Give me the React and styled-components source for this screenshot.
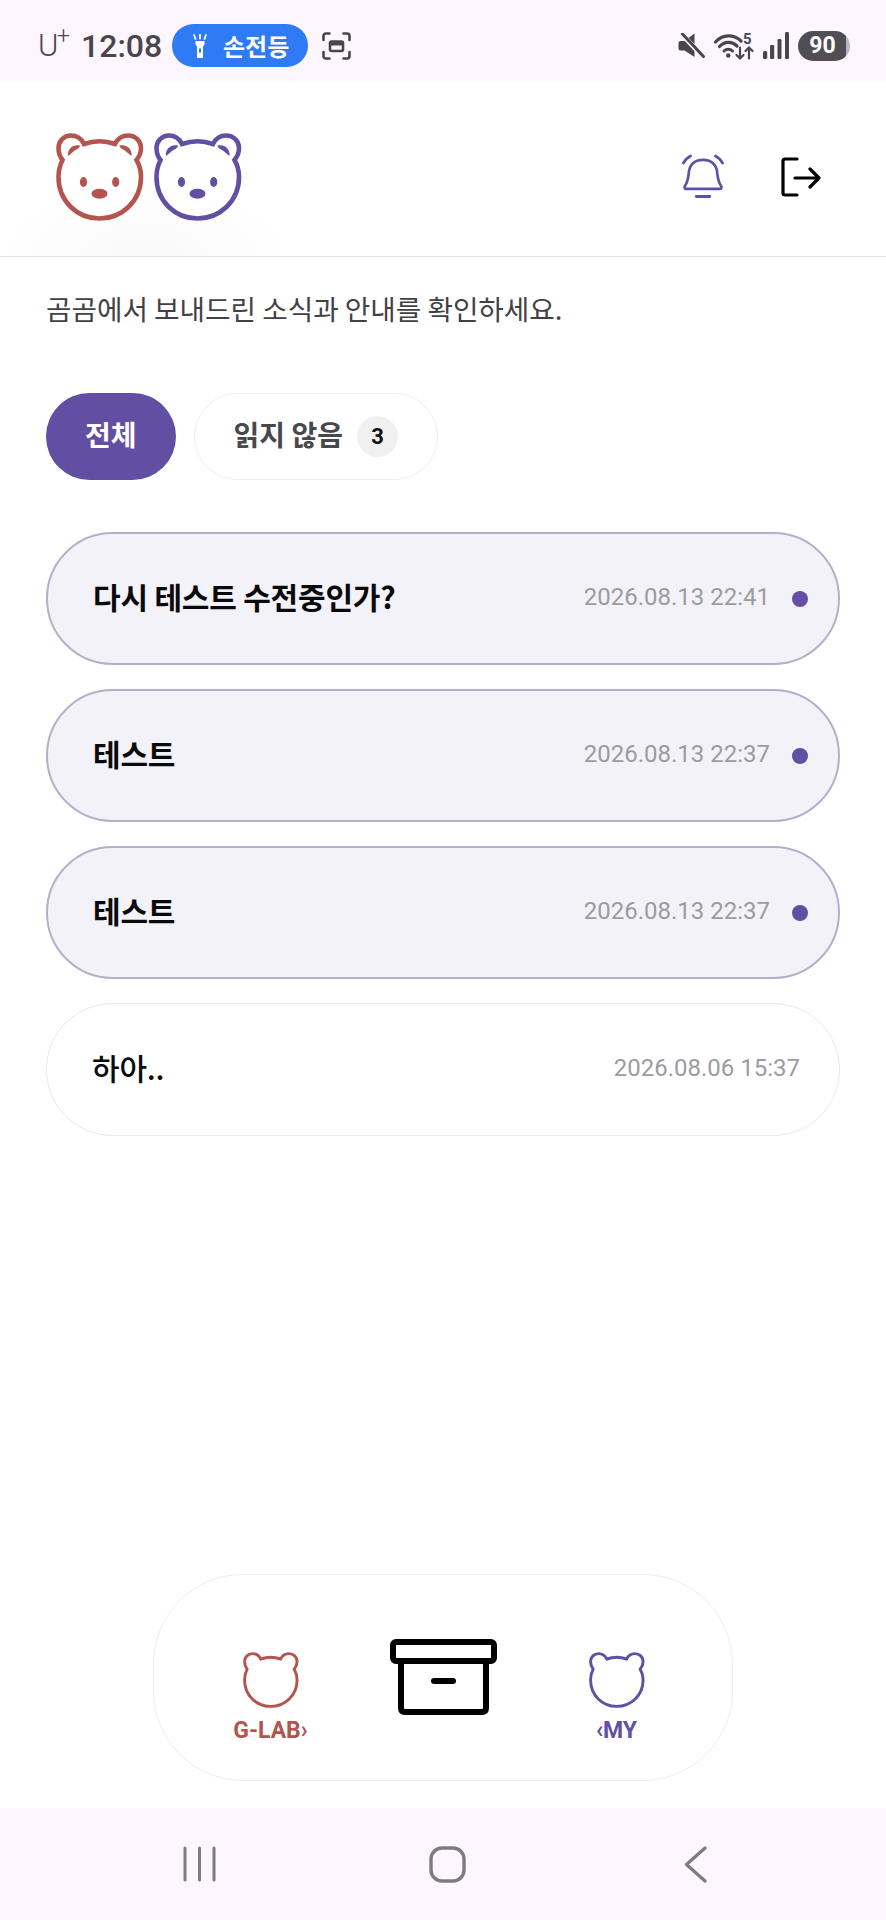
import React from "react";
import styled, { createGlobalStyle } from "styled-components";

const RED = "#b5534d";
const PURPLE = "#624ea3";

const GlobalStyle = createGlobalStyle`
  html, body {
    margin: 0;
    padding: 0;
    background: #fff;
  }
  body {
    font-family: "Noto Sans CJK KR", Roboto, sans-serif;
  }
`;

const Page = styled.div`
  width: 886px;
  height: 1920px;
  display: flex;
  flex-direction: column;
  background: #fff;
  overflow: hidden;
`;

const StatusBar = styled.div`
  height: 81px;
  flex: none;
  display: flex;
  align-items: center;
  justify-content: space-between;
  padding: 10px 36px 0 38px;
  background: #fdf6fe;
  box-sizing: border-box;
  color: #48464c;
`;

const StatusLeft = styled.div`
  display: flex;
  align-items: center;
`;

const Carrier = styled.span`
  font-family: Roboto, sans-serif;
  font-size: 31px;
  font-weight: 300;
  position: relative;
  width: 43px;
  line-height: 36px;
  sup {
    position: absolute;
    left: 19px;
    top: -3px;
    font-size: 23px;
    line-height: 24px;
  }
`;

const Clock = styled.span`
  font-family: Roboto, sans-serif;
  font-size: 32px;
  font-weight: 500;
  width: 91px;
  line-height: 36px;
`;

const TorchPill = styled.div`
  width: 136px;
  height: 43px;
  border-radius: 22px;
  background: #2f7bf6;
  color: #fff;
  display: flex;
  align-items: center;
  padding-left: 21px;
  gap: 16px;
  box-sizing: border-box;
  font-size: 24px;
  font-weight: 700;
  margin-right: 14px;
`;

const StatusRight = styled.div`
  display: flex;
  align-items: center;
  gap: 9px;
`;

const Battery = styled.div`
  width: 52px;
  height: 30px;
  border-radius: 15px;
  background: linear-gradient(90deg, #504e54 93%, #b9b7bc 93%);
  color: #fff;
  font-family: Roboto, sans-serif;
  font-size: 23px;
  font-weight: 700;
  display: flex;
  align-items: center;
  justify-content: center;
  padding-right: 3px;
  box-sizing: border-box;
`;

const Header = styled.header`
  height: 176px;
  flex: none;
  box-sizing: border-box;
  display: flex;
  align-items: center;
  justify-content: space-between;
  padding: 16px 65px 0 56px;
  border-bottom: 1px solid #e5e5e6;
  background: radial-gradient(ellipse 150px 75px at 145px 100%, #f9f9f9, #fff);
`;

const Logo = styled.div`
  display: flex;
  gap: 10px;
`;

const HeaderActions = styled.div`
  display: flex;
  align-items: center;
  gap: 57px;
`;

const Subtitle = styled.p`
  margin: 31px 46px 0;
  font-size: 27.7px;
  line-height: 40px;
  color: #414145;
`;

const Tabs = styled.div`
  display: flex;
  gap: 18px;
  margin: 65px 46px 0;
`;

const Tab = styled.div`
  height: 87px;
  box-sizing: border-box;
  border-radius: 44px;
  display: flex;
  align-items: center;
  padding: 0 39px 5px;
  gap: 14px;
  font-size: 28px;
  font-weight: 700;
  color: ${(p) => (p.$active ? "#fff" : "#48484c")};
  background: ${(p) => (p.$active ? PURPLE : "#fff")};
  border: ${(p) => (p.$active ? "none" : "1.5px solid #ececef")};
`;

const CountBadge = styled.span`
  width: 41px;
  height: 41px;
  margin-top: 5px;
  border-radius: 50%;
  background: #f0f0f0;
  color: #111;
  font-family: Roboto, sans-serif;
  font-size: 22px;
  font-weight: 700;
  display: flex;
  align-items: center;
  justify-content: center;
`;

const List = styled.div`
  display: flex;
  flex-direction: column;
  gap: 24px;
  margin: 52px 46px 0;
`;

const Row = styled.div`
  height: 133px;
  box-sizing: border-box;
  border-radius: 67px;
  display: flex;
  align-items: center;
  padding: 0 ${(p) => (p.$unread ? "30px" : "39px")} 0 45px;
  background: ${(p) => (p.$unread ? "#f3f2f9" : "#fff")};
  border: ${(p) => (p.$unread ? "2px solid #b3b0cb" : "1.5px solid #e9e9ec")};
`;

const RowTitle = styled.span`
  flex: 1;
  font-size: 30px;
  font-weight: ${(p) => (p.$unread ? 700 : 500)};
  color: #0a0a0c;
  letter-spacing: -0.2px;
  padding-bottom: 6px;
`;

const RowDate = styled.span`
  font-family: Roboto, sans-serif;
  font-size: 24px;
  color: #9c9ba1;
  padding-bottom: 3px;
`;

const Dot = styled.span`
  width: 16px;
  height: 16px;
  border-radius: 50%;
  background: ${PURPLE};
  margin-left: 22px;
`;

const Spacer = styled.div`
  flex: 1;
`;

const BottomNav = styled.nav`
  width: 580px;
  height: 207px;
  box-sizing: border-box;
  align-self: center;
  margin: 0 0 27px;
  border: 1.5px solid #ececef;
  border-radius: 90px;
  display: grid;
  grid-template-columns: 1fr 1fr 1fr;
  padding: 0 29px 0 30px;
`;

const NavItem = styled.div`
  display: flex;
  flex-direction: column;
  align-items: center;
  justify-content: ${(p) => (p.$center ? "flex-start" : "flex-end")};
  padding-top: ${(p) => (p.$center ? "64px" : "0")};
  padding-bottom: ${(p) => (p.$center ? "0" : "36px")};
  gap: 10px;
  font-family: Roboto, sans-serif;
  font-size: 23px;
  font-weight: 700;
  line-height: 26px;
  color: ${(p) => p.$color || "#000"};
`;

const SystemNav = styled.div`
  height: 112px;
  flex: none;
  background: #fdf6fe;
  display: flex;
  align-items: center;
  justify-content: space-between;
  padding: 0 179px 0 183px;
  box-sizing: border-box;
  svg:nth-child(2) {
    margin-right: 5px;
  }
`;

const BEAR_PATH =
  "M28 11 C38 7.5 49 7.5 59 11 C62 5 67 2.5 72 2.5 C79.5 2.5 85 8 85 15 C85 20 83 24 80.5 27 C83.5 32 85 38 85 44 C85 68 66 85.5 43.5 85.5 C21 85.5 2.5 68 2.5 44 C2.5 38 4 32 6.5 27 C4 24 2.5 20 2.5 15 C2.5 8 8 2.5 15 2.5 C20 2.5 25 5 28 11 Z";

const BearFace = ({ color }) => (
  <svg width="88" height="88" viewBox="0 0 88 88">
    <path d={BEAR_PATH} fill="#fff" stroke={color} strokeWidth="4.6" />
    <path d="M12 23 C11 16 17 11 24 12.5 C24 15 21 16 18 18 C16 19.5 15 21 12 23 Z" fill={color} />
    <path d="M75.5 23 C76.5 16 70.5 11 63.5 12.5 C63.5 15 66.5 16 69.5 18 C71.5 19.5 72.5 21 75.5 23 Z" fill={color} />
    <ellipse cx="27.5" cy="49" rx="3.6" ry="5" fill={color} />
    <ellipse cx="59.7" cy="49" rx="3.6" ry="5" fill={color} />
    <ellipse cx="43.5" cy="60.7" rx="8" ry="5" fill={color} />
  </svg>
);

const BearOutline = ({ color }) => (
  <svg width="56" height="56" viewBox="0 0 88 88">
    <path d={BEAR_PATH} fill="none" stroke={color} strokeWidth="4.6" />
  </svg>
);

const TorchIcon = () => (
  <svg width="14" height="24" viewBox="0 0 14 24" fill="#fff">
    <path d="M2.5 7 H11.5 V10.5 L10 12.5 V24 H4 V12.5 L2.5 10.5 Z M6 14.5 V18.5 H8 V14.5 Z" fillRule="evenodd" />
    <path d="M1 1 L2.5 5 M7 0.5 V4.5 M13 1 L11.5 5" stroke="#fff" strokeWidth="1.8" strokeLinecap="round" />
  </svg>
);

const ScreenshotIcon = () => (
  <svg width="29" height="28" viewBox="0 0 29 28" fill="none" stroke="#48464c" strokeWidth="2.6" strokeLinecap="round">
    <path d="M1.5 8 V4 Q1.5 1.5 4 1.5 H7.5 M21.5 1.5 H25 Q27.5 1.5 27.5 4 V8 M27.5 20 V24 Q27.5 26.5 25 26.5 H21.5 M7.5 26.5 H4 Q1.5 26.5 1.5 24 V20" />
    <rect x="8" y="9.5" width="13" height="9.5" rx="1.5" strokeWidth="2.6" />
    <path d="M8 10 H21 V13.5 H8 Z" fill="#48464c" stroke="none" />
  </svg>
);

const MuteIcon = () => (
  <svg width="27" height="25" viewBox="0 0 27 25">
    <path d="M0.5 10 Q0.5 8 2.5 8 H6.5 L16.5 0.5 V24 L6.5 17.5 H2.5 Q0.5 17.5 0.5 15.5 Z" fill="#48464c" />
    <path d="M3 0.5 L25.5 24" stroke="#fdf6fe" strokeWidth="5" />
    <path d="M4.5 1 L25.5 23.5" stroke="#48464c" strokeWidth="3" strokeLinecap="round" />
  </svg>
);

const WifiIcon = () => (
  <svg width="40" height="28" viewBox="0 0 40 28" fill="none" stroke="#48464c" strokeLinecap="round" overflow="visible">
    <path d="M1.5 10 C8.5 2 20 2 27 9" strokeWidth="3.2" />
    <path d="M5.5 14.5 C10.5 9 18 9 23 14" strokeWidth="3.2" />
    <path d="M10 19 C12.5 16.5 16 16.5 18.5 19" strokeWidth="3" />
    <circle cx="14.2" cy="23.5" r="2.2" fill="#48464c" stroke="none" />
    <path d="M26 15.5 V26.5 M22.5 23 L26 26.5 L29.5 23 M35 26.5 V15.5 M31.5 19 L35 15.5 L38.5 19" strokeWidth="2.2" />
    <text x="29" y="12" fontFamily="Roboto, sans-serif" fontSize="15" fontWeight="700" fill="#48464c" stroke="none">5</text>
  </svg>
);

const SignalIcon = () => (
  <svg width="26" height="27" viewBox="0 0 26 27" fill="#48464c">
    <rect x="0" y="19" width="4.2" height="8" rx="1.5" />
    <rect x="7" y="13" width="4.2" height="14" rx="1.2" />
    <rect x="14.5" y="7" width="4" height="20" rx="1.2" />
    <rect x="22" y="0" width="4" height="27" rx="1.2" />
  </svg>
);

const BellIcon = () => (
  <svg width="42" height="45" viewBox="0 0 44 46" fill="none" stroke={PURPLE} strokeWidth="2.8" strokeLinecap="round" strokeLinejoin="round">
    <path d="M4 36 Q2 36 3 33 C6 29 6.5 25 7 20 C7.5 11 13 5.5 22 5.5 C31 5.5 36.5 11 37 20 C37.5 25 38 29 41 33 Q42 36 40 36 Z" />
    <path d="M15 44 H29" strokeWidth="3" />
    <path d="M1.5 9 Q4 4 9 1.5 M42.5 9 Q40 4 35 1.5" />
  </svg>
);

const LogoutIcon = () => (
  <svg width="40" height="40" viewBox="0 0 40 40" fill="none" stroke="#000" strokeWidth="3.2" strokeLinecap="round" strokeLinejoin="round">
    <path d="M16 2 H4 Q2 2 2 4 V36 Q2 38 4 38 H16" />
    <path d="M14 21 H38 M29 12 L38 21 L29 30" />
  </svg>
);

const ArchiveIcon = () => (
  <svg width="107" height="76" viewBox="0 0 107 76" fill="none" stroke="#000" strokeWidth="6" strokeLinejoin="round" strokeLinecap="round">
    <rect x="3" y="3" width="101" height="19" rx="3" />
    <path d="M11 22 V69 Q11 73 15 73 H92 Q96 73 96 69 V22" />
    <path d="M44 42 H63" strokeWidth="6" />
  </svg>
);

const MenuIcon = () => (
  <svg width="33" height="36" viewBox="0 0 33 36" stroke="#7d7a80" strokeWidth="3" strokeLinecap="round">
    <path d="M2 2 V34 M16.5 2 V34 M31 2 V34" />
  </svg>
);

const HomeIcon = () => (
  <svg width="37" height="37" viewBox="0 0 37 37" fill="none" stroke="#7d7a80" strokeWidth="3.4">
    <rect x="2" y="2" width="33" height="33" rx="11" />
  </svg>
);

const BackIcon = () => (
  <svg width="23" height="37" viewBox="0 0 23 37" fill="none" stroke="#7d7a80" strokeWidth="3.2" strokeLinecap="round" strokeLinejoin="round">
    <path d="M21 2 L2.5 18.5 L21 35" />
  </svg>
);

const notices = [
  { id: 1, title: "다시 테스트 수전중인가?", date: "2026.08.13 22:41", unread: true },
  { id: 2, title: "테스트", date: "2026.08.13 22:37", unread: true },
  { id: 3, title: "테스트", date: "2026.08.13 22:37", unread: true },
  { id: 4, title: "하아..", date: "2026.08.06 15:37", unread: false },
];

const App = () => {
  return (
    <Page>
      <GlobalStyle />
      <StatusBar>
        <StatusLeft>
          <Carrier>
            U<sup>+</sup>
          </Carrier>
          <Clock>12:08</Clock>
          <TorchPill>
            <TorchIcon />
            손전등
          </TorchPill>
          <ScreenshotIcon />
        </StatusLeft>
        <StatusRight>
          <MuteIcon />
          <WifiIcon />
          <SignalIcon />
          <Battery>90</Battery>
        </StatusRight>
      </StatusBar>

      <Header>
        <Logo>
          <BearFace color={RED} />
          <BearFace color={PURPLE} />
        </Logo>
        <HeaderActions>
          <BellIcon />
          <LogoutIcon />
        </HeaderActions>
      </Header>

      <Subtitle>곰곰에서 보내드린 소식과 안내를 확인하세요.</Subtitle>

      <Tabs>
        <Tab $active>전체</Tab>
        <Tab>
          읽지 않음
          <CountBadge>3</CountBadge>
        </Tab>
      </Tabs>

      <List>
        {notices.map((n) => (
          <Row key={n.id} $unread={n.unread}>
            <RowTitle $unread={n.unread}>{n.title}</RowTitle>
            <RowDate>{n.date}</RowDate>
            {n.unread && <Dot />}
          </Row>
        ))}
      </List>

      <Spacer />

      <BottomNav>
        <NavItem $color={RED}>
          <BearOutline color={RED} />
          G-LAB›
        </NavItem>
        <NavItem $center>
          <ArchiveIcon />
        </NavItem>
        <NavItem $color={PURPLE}>
          <BearOutline color={PURPLE} />
          ‹MY
        </NavItem>
      </BottomNav>

      <SystemNav>
        <MenuIcon />
        <HomeIcon />
        <BackIcon />
      </SystemNav>
    </Page>
  );
};

export default App;
